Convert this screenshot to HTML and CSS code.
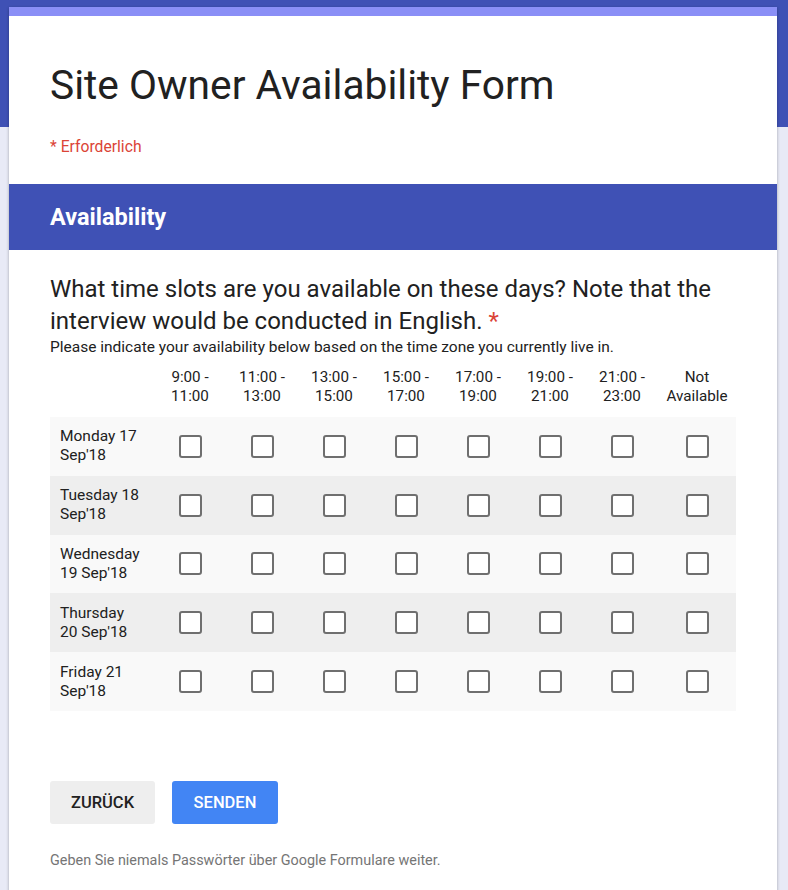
FILE: index.html
```html
<!DOCTYPE html>
<html>
<head>
<meta charset="utf-8">
<link rel="stylesheet" href="styles.css">
</head>
<body>
<div class="card">
  <div class="strip"></div>
  <div class="head">
    <h1 class="title">Site Owner Availability Form</h1>
    <div class="req">* Erforderlich</div>
  </div>
  <div class="section">Availability</div>
  <div class="question">
    <div class="qtitle">What time slots are you available on these days? Note that the interview would be conducted in English. <span class="star">*</span></div>
    <div class="qdesc">Please indicate your availability below based on the time zone you currently live in.</div>
    <div class="grid">
      <div class="hrow">
        <div class="lab"></div>
        <div class="col">9:00 -<br>11:00</div>
        <div class="col">11:00 -<br>13:00</div>
        <div class="col">13:00 -<br>15:00</div>
        <div class="col">15:00 -<br>17:00</div>
        <div class="col">17:00 -<br>19:00</div>
        <div class="col">19:00 -<br>21:00</div>
        <div class="col">21:00 -<br>23:00</div>
        <div class="col last">Not<br>Available</div>
      </div>
      <div class="row odd">
        <div class="lab">Monday 17 Sep'18</div>
        <div class="col"><span class="cb"></span></div><div class="col"><span class="cb"></span></div><div class="col"><span class="cb"></span></div><div class="col"><span class="cb"></span></div><div class="col"><span class="cb"></span></div><div class="col"><span class="cb"></span></div><div class="col"><span class="cb"></span></div><div class="col last"><span class="cb"></span></div>
      </div>
      <div class="row even">
        <div class="lab">Tuesday 18 Sep'18</div>
        <div class="col"><span class="cb"></span></div><div class="col"><span class="cb"></span></div><div class="col"><span class="cb"></span></div><div class="col"><span class="cb"></span></div><div class="col"><span class="cb"></span></div><div class="col"><span class="cb"></span></div><div class="col"><span class="cb"></span></div><div class="col last"><span class="cb"></span></div>
      </div>
      <div class="row odd">
        <div class="lab">Wednesday 19 Sep'18</div>
        <div class="col"><span class="cb"></span></div><div class="col"><span class="cb"></span></div><div class="col"><span class="cb"></span></div><div class="col"><span class="cb"></span></div><div class="col"><span class="cb"></span></div><div class="col"><span class="cb"></span></div><div class="col"><span class="cb"></span></div><div class="col last"><span class="cb"></span></div>
      </div>
      <div class="row even">
        <div class="lab">Thursday 20 Sep'18</div>
        <div class="col"><span class="cb"></span></div><div class="col"><span class="cb"></span></div><div class="col"><span class="cb"></span></div><div class="col"><span class="cb"></span></div><div class="col"><span class="cb"></span></div><div class="col"><span class="cb"></span></div><div class="col"><span class="cb"></span></div><div class="col last"><span class="cb"></span></div>
      </div>
      <div class="row odd">
        <div class="lab">Friday 21 Sep'18</div>
        <div class="col"><span class="cb"></span></div><div class="col"><span class="cb"></span></div><div class="col"><span class="cb"></span></div><div class="col"><span class="cb"></span></div><div class="col"><span class="cb"></span></div><div class="col"><span class="cb"></span></div><div class="col"><span class="cb"></span></div><div class="col last"><span class="cb"></span></div>
      </div>
    </div>
  </div>
  <div class="buttons">
    <button class="btn back">ZURÜCK</button>
    <button class="btn send">SENDEN</button>
  </div>
  <div class="foot">Geben Sie niemals Passwörter über Google Formulare weiter.</div>
</div>
</body>
</html>
```
FILE: styles.css
```css
html, body {
  margin: 0;
  padding: 0;
}
body {
  height: 890px;
  overflow: hidden;
  background: linear-gradient(#3f51b5 0, #3f51b5 127px, #e8eaf6 127px);
  font-family: Roboto, "Liberation Sans", sans-serif;
  color: #202124;
}
.card {
  margin: 7px 0 0 9px;
  width: 768px;
  height: 1000px;
  background: #fff;
  box-shadow: 0 1px 3px rgba(0,0,0,0.3);
}
.strip {
  height: 9px;
  background: #8a8ff6;
}
.head {
  padding: 47px 41px 0 41px;
  height: 168px;
  box-sizing: border-box;
}
.title {
  margin: 0;
  font-weight: 400;
  font-size: 40.7px;
  line-height: 44px;
  color: #212121;
}
.req {
  margin-top: 30px;
  font-size: 15.7px;
  line-height: 20px;
  color: #db4437;
}
.section {
  height: 66px;
  background: #3f51b5;
  color: #fff;
  font-weight: 700;
  font-size: 23.5px;
  line-height: 66px;
  padding-left: 41px;
}
.question {
  padding: 23px 41px 0 41px;
}
.qtitle {
  font-size: 24px;
  line-height: 32px;
  color: #212121;
}
.star {
  color: #db4437;
}
.qdesc {
  font-size: 15.5px;
  line-height: 20px;
  color: #212121;
}
.grid {
  margin-top: 11px;
  width: 686px;
}
.hrow, .row {
  display: flex;
  align-items: center;
}
.hrow {
  height: 49px;
  align-items: flex-start;
  font-size: 15.2px;
  line-height: 19px;
  color: #212121;
}
.row {
  height: 58.8px;
}
.row.odd { background: #f9f9f9; }
.row.even { background: #eeeeee; }
.lab {
  width: 104px;
  flex: none;
  box-sizing: border-box;
  padding-left: 10px;
  padding-right: 12px;
  font-size: 15.5px;
  line-height: 19px;
  color: #212121;
}
.col {
  width: 72px;
  flex: none;
  text-align: center;
  display: flex;
  justify-content: center;
}
.hrow .col { display: block; }
.col.last { width: 78px; }
.cb {
  display: block;
  width: 23px;
  height: 23px;
  box-sizing: border-box;
  border: 2px solid #6f6f6f;
  border-radius: 3px;
  background: #fff;
}
.buttons {
  display: flex;
  gap: 17px;
  padding: 70px 41px 0 41px;
}
.btn {
  height: 43px;
  border: none;
  border-radius: 3px;
  font-family: Roboto, "Liberation Sans", sans-serif;
  font-weight: 500;
  font-size: 16.5px;
  padding: 0;
}
.back {
  width: 105px;
  background: #eeeeee;
  color: #212121;
}
.send {
  width: 106px;
  background: #4285f4;
  color: #fff;
}
.foot {
  padding: 28px 41px 0 41px;
  font-size: 14.4px;
  line-height: 18px;
  color: #757575;
}
```
